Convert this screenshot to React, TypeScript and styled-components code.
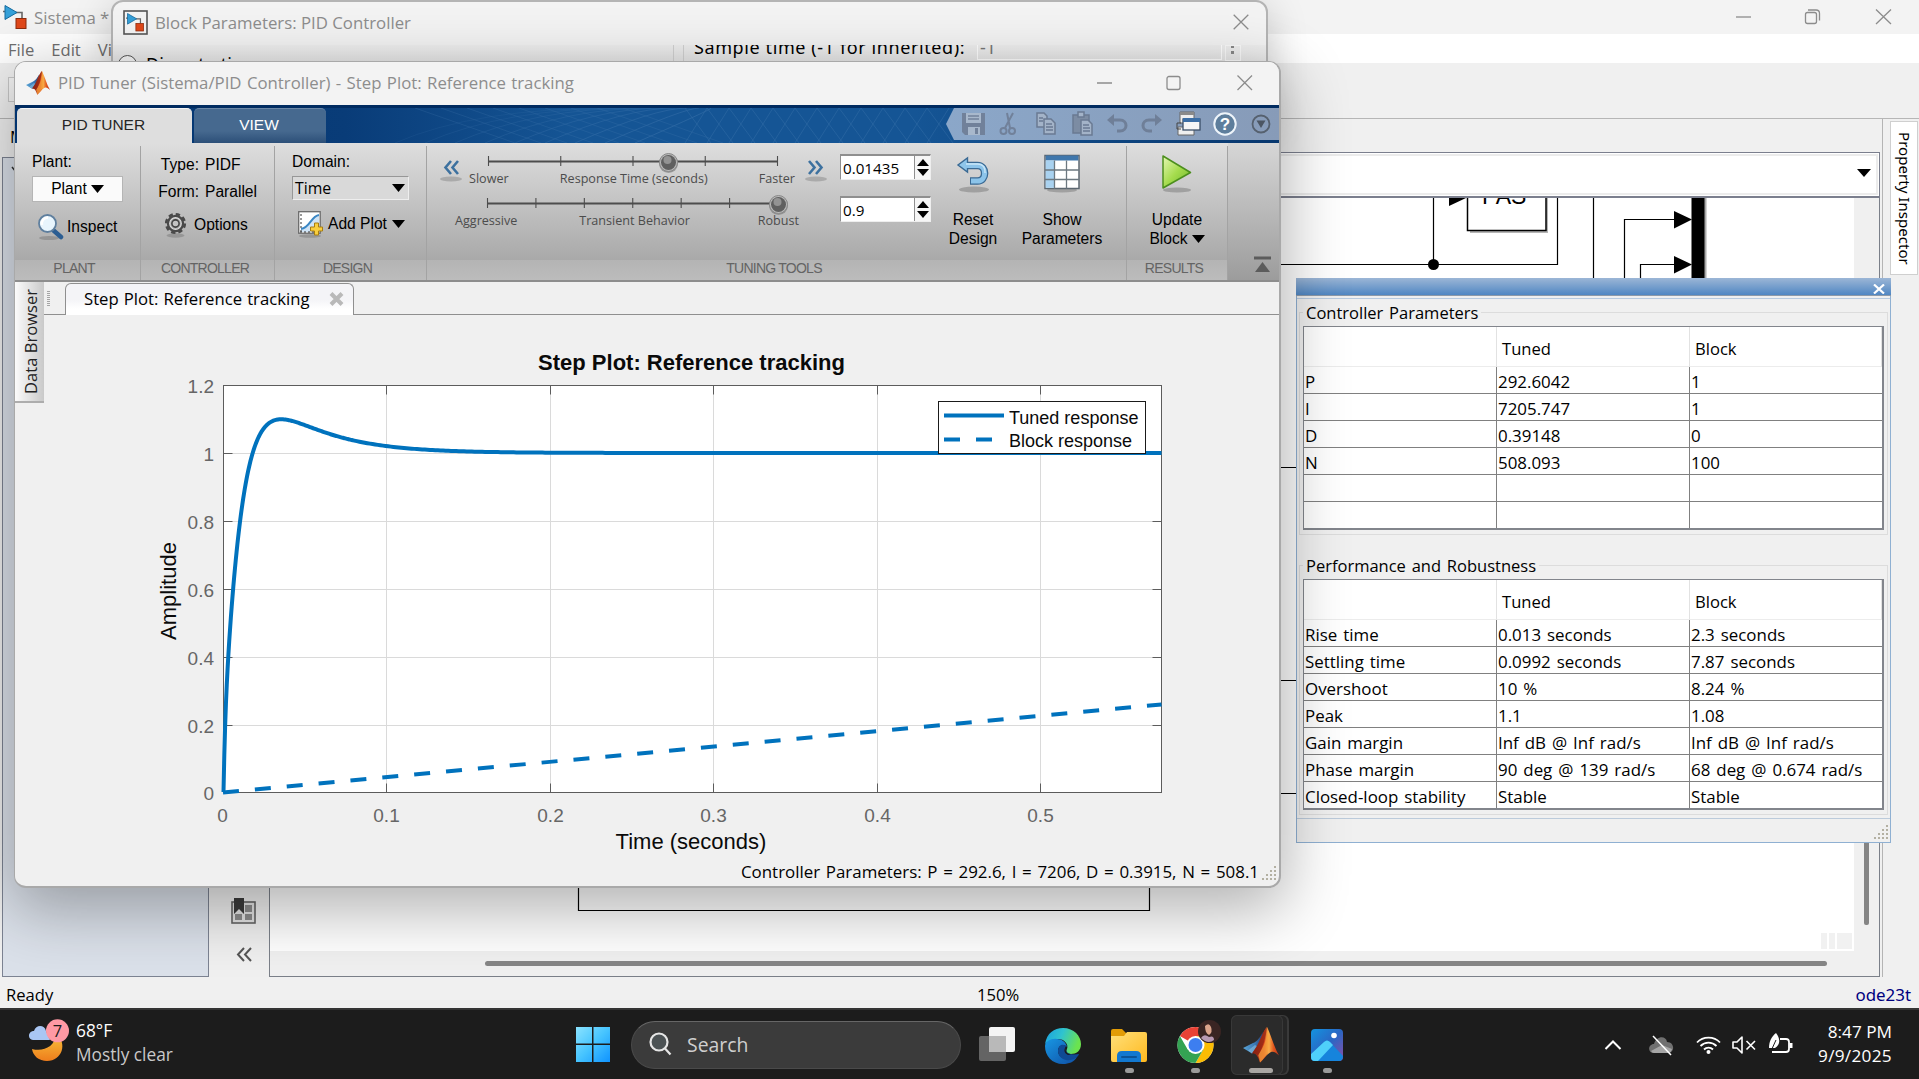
import React from 'react';
import styled, { createGlobalStyle } from 'styled-components';

const UI = `'Open Sans', 'Noto Sans', sans-serif`;
const ARIAL = `'Liberation Sans', Arial, sans-serif`;

const Global = createGlobalStyle`
  *, *::before, *::after { box-sizing: border-box; }
  html, body { margin: 0; padding: 0; overflow: hidden; }
  body { font-family: ${UI}; font-size: 16.4px; color: #000; }
  svg { display: block; flex: none; }
`;

const Desktop = styled.div`
  position: relative;
  width: 1919px;
  height: 1079px;
  overflow: hidden;
  display: flex;
  flex-direction: column;
  background: #f0f0f0;
`;

/* ---------- Simulink editor window ---------- */
const Editor = styled.div`
  height: 1008px;
  display: flex;
  flex-direction: column;
  background: #f0f0f0;
  & > * { flex-shrink: 0; }
`;
const EditorTitle = styled.div`
  height: 34px;
  display: flex;
  align-items: center;
  padding: 0 27px 0 3px;
  background: #f3f3f3;
  color: #8d8d8d;
  font-size: 16.8px;
  svg + span { margin-left: 6px; }
`;
const Spacer = styled.div`flex: 1;`;
const EditorMenu = styled.div`
  height: 31px;
  display: flex;
  gap: 17px;
  padding-left: 8px;
  line-height: 32px;
  background: #fff;
  border-bottom: 2px solid #f0f0f0;
  color: #6f6f6f;
  font-size: 16.6px;
`;
const EditorTools = styled.div`
  height: 54px;
  padding: 12px 8px;
  border-bottom: 1px solid #b6b6b6;
`;
const ToolStub = styled.div`
  width: 30px;
  height: 25px;
  border: 1px solid #c8c8c8;
  background: #f4f4f4;
`;
const EditorBody = styled.div`
  height: 858px;
  display: flex;
  padding-left: 2px;
`;
const TreeColumn = styled.div`
  width: 207px;
  display: flex;
  flex-direction: column;
`;
const TreeCaption = styled.div`
  height: 38px;
  padding: 6px 0 0 8px;
  line-height: 24px;
`;
const Tree = styled.div`
  flex: 1;
  padding: 8px 8px;
  border: 1px solid #7c8392;
  background: #dbe1ea;
`;
const Palette = styled.div`
  width: 60px;
  display: flex;
  flex-direction: column;
  align-items: center;
  justify-content: flex-end;
  gap: 23px;
  padding: 0 0 15px 9px;
`;
const CanvasColumn = styled.div`
  width: 1611px;
  display: flex;
  flex-direction: column;
  padding-top: 33px;
`;
const AddressBar = styled.div`
  height: 46px;
  display: flex;
  align-items: center;
  justify-content: flex-end;
  padding: 0 8px 3px 0;
  border: 1px solid #7b7f8e;
  border-bottom-width: 2px;
  background: #fff;
  box-shadow: inset 0 0 0 1px #fff, inset 0 0 0 3px #ececec;
`;
const CanvasFrame = styled.div`
  flex: 1;
  display: flex;
  flex-direction: column;
  border: 1px solid #7b8089;
  border-top: 0;
  background: #f0f0f0;
`;
const CanvasRow = styled.div`
  height: 753px;
  display: flex;
`;
const Sheet = styled.div`
  width: 1584px;
  background: #fff;
`;
const VTrack = styled.div`
  width: 25px;
  padding: 588px 0 0 10px;
`;
const VThumb = styled.div`
  width: 5px;
  height: 139px;
  border-radius: 2px;
  background: #858585;
`;
const HTrack = styled.div`
  flex: 1;
  padding: 10px 0 0 215px;
`;
const HThumb = styled.div`
  width: 1342px;
  height: 5px;
  border-radius: 3px;
  background: #858585;
`;
const InspectorColumn = styled.div`
  width: 36px;
  margin-left: 2px;
  border-left: 1px solid #b4b4b4;
  padding: 2px 0 0 7px;
`;
const InspectorTab = styled.div`
  width: 28px;
  height: 154px;
  border: 1px solid #cfcfcf;
  background: #fff;
  writing-mode: vertical-rl;
  padding-top: 10px;
  font: 15.1px/25px 'Noto Sans', sans-serif;
`;
const EditorStatus = styled.div`
  height: 31px;
  display: grid;
  grid-template-columns: 971px 1fr auto;
  padding: 0 8px 0 6px;
  line-height: 35px;
  font-size: 16.6px;
  a { color: #00007f; font-family: 'Noto Sans', sans-serif; font-size: 16.9px; }
`;

/* ---------- Block parameters dialog ---------- */
const Dialog = styled.div`
  position: absolute;
  left: 111px;
  top: 0;
  width: 1157px;
  height: 120px;
  border: 2px solid #b4b4b4;
  border-radius: 12px 12px 0 0;
  background: #f3f3f3;
  box-shadow: 0 8px 40px rgba(0, 0, 0, 0.2);
  overflow: hidden;
`;
const DialogTitle = styled.div`
  height: 43px;
  display: flex;
  align-items: center;
  padding: 0 17px 3px 10px;
  color: #8d8d8d;
  font-size: 16.8px;
  span { margin-left: 7px; }
`;
const DialogBody = styled.div`
  height: 40px;
  display: flex;
  background: linear-gradient(#efefef, #dcdcdc);
  overflow: hidden;
  font-size: 17.6px;
`;
const RadioRow = styled.div`
  width: 561px;
  display: flex;
  padding: 10px 0 0 5px;
  gap: 9px;
  line-height: 24px;
  border-right: 1px solid #d2d2d2;
  span { margin-top: -3px; font-family: 'Noto Sans', sans-serif; font-size: 18px; }
`;
const Radio = styled.i`
  width: 19px;
  height: 19px;
  border: 1px solid #555;
  border-radius: 50%;
  background: #f6f6f6;
`;
const SampleRow = styled.div`
  flex: 1;
  display: flex;
  margin-left: 9px;
  padding-left: 10px;
  border-left: 1px solid #d2d2d2;
  line-height: 4px;
  white-space: nowrap;
  font-family: 'Noto Sans', sans-serif;
  font-size: 18px;
  & > span { width: 283px; letter-spacing: 0.6px; }
`;
const SampleField = styled.div`
  width: 245px;
  height: 15px;
  padding-left: 2px;
  border: 1px solid #fff;
  border-top: 0;
  color: #777;
`;
const MoreButton = styled.div`
  width: 16px;
  height: 16px;
  margin-left: 3px;
  border: 1px solid #fafafa;
  display: flex;
  justify-content: center;
`;

/* ---------- PID tuner window ---------- */
const Tuner = styled.div`
  position: absolute;
  left: 14px;
  top: 61px;
  width: 1267px;
  height: 827px;
  display: flex;
  flex-direction: column;
  border: 2px solid #a9a9a9;
  border-left-width: 1px;
  border-top-width: 1px;
  border-radius: 12px;
  background: #f0f0f0;
  box-shadow: 0 18px 64px 4px rgba(0, 0, 0, 0.31);
  overflow: hidden;
`;
const TunerTitle = styled.div`
  height: 43px;
  display: flex;
  align-items: center;
  padding: 0 26px 2px 11px;
  background: #f3f3f3;
  color: #8d8d8d;
  font-size: 16.8px;
  span { margin-left: 8px; word-spacing: 1px; }
`;
const TabStrip = styled.div`
  height: 38px;
  display: flex;
  align-items: flex-end;
  background: linear-gradient(90deg, #02346f 0, #093c78 330px, #155595 560px, #155595 900px, #08386f 1250px);
  border-top: 3px solid #002b60;
  position: relative;
`;
const StripPattern = styled.svg`
  position: absolute;
  left: 340px;
  top: 0;
`;
const RibbonTab = styled.div<{ $w: number; $on?: boolean }>`
  width: ${p => p.$w}px;
  height: 35px;
  margin-left: 2px;
  padding-right: 2px;
  border-radius: 5px 5px 0 0;
  text-align: center;
  font: 15.5px/32px ${ARIAL};
  color: ${p => (p.$on ? '#262626' : '#fff')};
  background: ${p => (p.$on ? '#dedede' : 'linear-gradient(#46698f 0, #46698f 65%, #2c4f78)')};
  border-top: 1px solid ${p => (p.$on ? '#f4f4f4' : '#6b87a6')};
`;
const QuickAccess = styled.div`
  position: relative;
  width: 333px;
  height: 32px;
  margin-left: auto;
  margin-bottom: 3px;
  padding-left: 15px;
  display: flex;
  align-items: center;
  background: linear-gradient(90deg, #8ba7c9, #879bb8);
  clip-path: polygon(8px 0, 100% 0, 100% 100%, 8px 100%, 0 50%);
`;
const QuickSlot = styled.div<{ $w: number }>`
  width: ${p => p.$w}px;
  display: flex;
`;
const Ribbon = styled.div`
  height: 139px;
  display: flex;
  background: linear-gradient(#dedede 0, #a9a9a9 117px, #b4b4b4 117px, #bcbcbc);
  border-bottom: 2px solid #8d8d8d;
  font-family: ${ARIAL};
  font-size: 15.6px;
`;
const Section = styled.div<{ $w: number }>`
  width: ${p => p.$w}px;
  display: flex;
  flex-direction: column;
  border-right: 1px solid;
  border-image: linear-gradient(transparent 4px, #a3a3a3 4px) 1;
`;
const SectionBody = styled.div<{ $row?: boolean; $pl?: number }>`
  height: 117px;
  display: flex;
  flex-direction: ${p => (p.$row ? 'row' : 'column')};
  padding-left: ${p => p.$pl || 0}px;
`;
const SectionName = styled.div<{ $shift?: number }>`
  height: 20px;
  padding-right: ${p => p.$shift || 0}px;
  text-align: center;
  font-size: 14px;
  letter-spacing: -0.75px;
  line-height: 17px;
  color: #646464;
`;
const Caption = styled.div`
  height: 33px;
  line-height: 37px;
`;
const PlantButton = styled.div`
  width: 91px;
  height: 26px;
  display: flex;
  align-items: center;
  justify-content: center;
  gap: 4px;
  background: #fafafa;
  border: 1px solid #b5b5b5;
  line-height: 24px;
`;
const TimeSelect = styled.div`
  width: 117px;
  height: 24px;
  display: flex;
  align-items: center;
  justify-content: space-between;
  padding: 0 3px 0 2px;
  border: 1px solid #979797;
  border-right-color: #eee;
  border-bottom-color: #eee;
  background: #d9d9d9;
  font: 15.8px/22px ${UI};
`;
const ToolLine = styled.div<{ $mt: number; $ml: number; $gap: number }>`
  display: flex;
  align-items: center;
  height: 28px;
  margin: ${p => p.$mt}px 0 0 ${p => p.$ml}px;
  gap: ${p => p.$gap}px;
  white-space: nowrap;
`;
const FormGrid = styled.div`
  display: grid;
  grid-template-columns: 41px 1fr;
  column-gap: 6px;
  padding: 8px 0 0 17px;
  grid-auto-rows: 27px;
  line-height: 27px;
  span:nth-child(odd) { text-align: right; }
`;
const Sliders = styled.div`
  width: 397px;
  display: flex;
  flex-direction: column;
  gap: 3px;
  padding-top: 4px;
`;
const SliderRow = styled.div<{ $pl: number }>`
  height: 39px;
  display: flex;
  padding-left: ${p => p.$pl}px;
`;
const SliderBlock = styled.div<{ $w: number; $pl?: number }>`
  width: ${p => p.$w}px;
  padding-left: ${p => p.$pl || 0}px;
`;
const SliderNames = styled.div<{ $mid: number }>`
  display: flex;
  justify-content: space-between;
  margin-top: 1px;
  font: 12.6px/16px ${UI};
  color: #4c4c4c;
  white-space: nowrap;
  span:nth-child(2) { margin-left: ${p => p.$mid * 2}px; }
`;
const Jog = styled.div<{ $w: number; $ml: number }>`
  width: ${p => p.$w}px;
  margin-left: ${p => p.$ml}px;
  padding-top: 12px;
`;
const Spinners = styled.div`
  width: 91px;
  display: flex;
  flex-direction: column;
  gap: 16px;
  margin-left: 16px;
  padding-top: 11px;
`;
const SpinBox = styled.div`
  height: 26px;
  display: flex;
  border: 1px solid #8f8f8f;
  border-top-width: 2px;
  border-right-color: #eee;
  border-bottom-color: #eee;
  background: #f6f6f6;
  font: 15.2px/24px ${UI};
  & > span { flex: 1; padding-left: 2px; background: #fff; border-right: 1px solid #8f8f8f; }
`;
const SpinButtons = styled.div`
  width: 15px;
  display: flex;
  flex-direction: column;
  align-items: center;
  justify-content: space-evenly;
`;
const BigButton = styled.div<{ $w: number; $ml: number }>`
  width: ${p => p.$w}px;
  margin-left: ${p => p.$ml}px;
  padding-top: 10px;
  display: flex;
  flex-direction: column;
  align-items: center;
  line-height: 19px;
  text-align: center;
`;
const BigIcon = styled.div<{ $ml?: number }>`
  height: 57px;
  padding-left: ${p => p.$ml || 0}px;
`;
const InlineRow = styled.div`
  display: flex;
  align-items: center;
  gap: 4px;
`;
const Collapse = styled.div`
  flex: 1;
  background: linear-gradient(#d6d6d6, #9c9c9c);
  padding: 113px 0 0 26px;
`;

const DocArea = styled.div`
  height: 572px;
  display: flex;
`;
const SideBar = styled.div`width: 29px;`;
const SideTab = styled.div`
  width: 29px;
  height: 121px;
  padding-right: 3px;
  writing-mode: vertical-rl;
  transform: rotate(180deg);
  text-align: center;
  font-size: 16.6px;
  line-height: 26px;
  color: #222;
  background: linear-gradient(270deg, #fbfbfb, #c9c9c9);
  border-top: 2px solid #adadad;
`;
const DocColumn = styled.div`
  flex: 1;
  display: flex;
  flex-direction: column;
`;
const DocTabs = styled.div`
  height: 33px;
  display: flex;
  align-items: flex-end;
`;
const TabGap = styled.div<{ $w?: number }>`
  ${p => (p.$w ? `width: ${p.$w}px;` : 'flex: 1;')}
  height: 32px;
  padding: 8px 0 0 3px;
  border-bottom: 1px solid #8f8f8f;
`;
const Grip = styled.div`
  width: 3px;
  height: 15px;
  background: repeating-linear-gradient(#a5a5a5 0 1px, transparent 1px 2px);
`;
const DocTab = styled.div`
  width: 289px;
  height: 32px;
  display: flex;
  align-items: center;
  padding: 0 9px 2px 18px;
  border: 1px solid #8f8f8f;
  border-bottom: 0;
  border-radius: 6px 6px 0 0;
  background: linear-gradient(#f4f4f7 50%, #fff 80%);
  justify-content: space-between;
  white-space: nowrap;
  span { font-size: 16.7px; word-spacing: 0.8px; line-height: 28px; }
`;
const TunerStatus = styled.div`
  height: 30px;
  display: flex;
  justify-content: flex-end;
  align-items: flex-end;
  padding: 0 2px 3px 0;
  gap: 3px;
  font-size: 16.9px;
  word-spacing: 1.3px;
  span { line-height: 30px; margin-bottom: -6px; }
`;

/* ---------- Parameters panel ---------- */
const Panel = styled.div`
  position: absolute;
  left: 1296px;
  top: 278px;
  width: 595px;
  height: 565px;
  display: flex;
  flex-direction: column;
  border: 1px solid #8fb0d2;
  background: #f0f0f0;
`;
const PanelBar = styled.div`
  height: 18px;
  margin: -1px -1px 0;
  display: flex;
  justify-content: flex-end;
  padding: 6px 6px 0 0;
  background: linear-gradient(#9cb6d6, #5087c3);
  border-bottom: 1px solid #8e9aa8;
`;
const PanelRule = styled.div`
  height: 3px;
  border-bottom: 1px solid #b8cbe0;
`;
const Group = styled.fieldset<{ $h: number; $mt: number }>`
  height: ${p => p.$h}px;
  width: 589px;
  margin: ${p => p.$mt}px 0 0 2px;
  padding: 1px 0 0 3px;
  border: 1px solid #dcdcdc;
`;
const Legend = styled.legend`
  padding: 0 3px;
  font-size: 16.5px;
  word-spacing: 1.5px;
  line-height: 25px;
  height: 25px;
`;
const Table = styled.div`
  width: 581px;
  display: grid;
  grid-template-columns: 193px 193px 192px;
  border: 1px solid #82858c;
  border-right-width: 2px;
  border-bottom-width: 2px;
  background: #fff;
`;
const HeadCell = styled.div`
  height: 40px;
  padding-left: 5px;
  line-height: 43px;
  font-size: 16.6px;
  border-right: 1px solid #e2e2e2;
  border-bottom: 1px solid #ececec;
`;
const Cell = styled.div<{ $last?: boolean; $edge?: boolean }>`
  height: ${p => (p.$last ? 26 : 27)}px;
  padding-left: 1px;
  font-size: 16.9px;
  word-spacing: 1.6px;
  line-height: 29px;
  white-space: nowrap;
  border-right: ${p => (p.$edge ? 0 : 1)}px solid #808080;
  border-bottom: ${p => (p.$last ? 0 : 1)}px solid #808080;
`;
const PanelFoot = styled.div`
  flex: 1;
  margin-top: 3px;
  display: flex;
  justify-content: flex-end;
  align-items: flex-end;
  padding: 0 1px 2px 0;
  border-top: 1px solid #bccbdb;
`;

/* ---------- Taskbar ---------- */
const Taskbar = styled.div`
  height: 71px;
  display: flex;
  align-items: center;
  background: #1c1c1c;
  border-top: 2px solid #343434;
  color: #fff;
  position: relative;
`;
const Weather = styled.div`
  width: 574px;
  display: flex;
  gap: 6px;
  padding: 0 0 3px 28px;
  font-size: 17.3px;
  line-height: 24px;
  color: #c9c9c9;
  b { font-weight: 400; color: #fff; }
  div { display: flex; flex-direction: column; }
`;
const SearchBox = styled.div`
  width: 330px;
  height: 48px;
  margin-left: 20px;
  display: flex;
  align-items: center;
  padding: 0 0 1px 16px;
  gap: 15px;
  border-radius: 24px;
  background: #3b3b3b;
  border: 1px solid #4a4a4a;
  border-top-color: #666;
  font-size: 19.4px;
  color: #cfcfcf;
`;
const Apps = styled.div`
  display: flex;
  margin-left: 14px;
`;
const AppSlot = styled.div`
  position: relative;
  width: 54px;
  height: 60px;
  margin-right: 12px;
  display: flex;
  justify-content: center;
  padding-top: 12px;
`;
const TaskViewSlot = styled(AppSlot)`
  width: 43px;
  padding-top: 11px;
  margin-right: 18px;
`;
const ChromeSlot = styled(AppSlot)`
  padding: 4px 0 0 9px;
`;
const ActiveSlot = styled(AppSlot)`
  width: 52px;
  margin: 0 17px 0 -3px;
  padding-left: 7px;
  border-radius: 6px;
  background: #2b2b2b;
  box-shadow: inset 0 0 0 1px #383838, 5px 0 0 -1px #262626, 6px 0 0 0 #3a3a3a;
`;
const Running = styled.i<{ $wide?: boolean }>`
  position: absolute;
  bottom: 2px;
  left: 50%;
  width: ${p => (p.$wide ? 24 : 9)}px;
  height: 5px;
  margin-left: ${p => (p.$wide ? -8 : -4)}px;
  border-radius: 3px;
  background: ${p => (p.$wide ? '#a9a6a3' : '#9a9a9a')};
`;
const Tray = styled.div`
  margin-left: auto;
  display: flex;
  align-items: center;
`;
const TraySlot = styled.div<{ $w: number }>`width: ${p => p.$w}px;`;
const Clock = styled.div`
  width: 129px;
  padding: 0 27px 2px 0;
  display: flex;
  flex-direction: column;
  align-items: flex-end;
  white-space: nowrap;
  font-size: 17.2px;
  line-height: 24px;
  span:last-child { letter-spacing: 0.3px; }
`;

/* ---------- Icons ---------- */
const Down = ({ w = 13, h = 8 }: { w?: number; h?: number }) => (
  <svg width={w} height={h} viewBox="0 0 12 8" preserveAspectRatio="none"><path d="M0 0H12L6 8Z" fill="#000" /></svg>
);
const Up = () => (
  <svg width="12" height="7"><path d="M0 7H12L6 0Z" fill="#000" /></svg>
);
const CloseX = ({ c = '#8c8c8c' }: { c?: string }) => (
  <svg width="16" height="16"><path d="M.7 .7L15.3 15.3M15.3 .7L.7 15.3" stroke={c} strokeWidth="1.3" /></svg>
);

const SimulinkIcon = ({ framed }: { framed?: boolean }) => (
  <svg width="25" height="25" viewBox="0 0 25 25">
    {framed && <rect x="1" y="1" width="23" height="23" fill="#f4f4f4" stroke="#555" strokeWidth="1.6" />}
    <g transform={framed ? 'translate(3 3.5) scale(.76)' : 'translate(0 .5)'}>
      <path d="M0 6H4M13 7H19V13" fill="none" stroke="#666" strokeWidth="1.6" />
      <path d="M2 0L14 7L2 14Z" fill="#35a0d8" stroke="#14699c" strokeWidth="1" />
      <rect x="13" y="13" width="10" height="10" fill="#e0481a" stroke="#8d2b0c" />
    </g>
  </svg>
);

const MatlabIcon = ({ size }: { size: number }) => (
  <svg width={size} height={size} viewBox="0 0 36 36">
    <defs>
      <linearGradient id={`mo${size}`} x1="0" x2="1" y1="0" y2="0">
        <stop offset="0" stopColor="#7d1f12" /><stop offset=".45" stopColor="#d7431b" />
        <stop offset=".62" stopColor="#f9b04c" /><stop offset=".8" stopColor="#e2571e" /><stop offset="1" stopColor="#b5301a" />
      </linearGradient>
      <linearGradient id={`mb${size}`} x1="0" x2="1" y1="0" y2="0">
        <stop offset="0" stopColor="#5aa5d6" /><stop offset=".6" stopColor="#3a78b4" /><stop offset="1" stopColor="#2b3a6c" />
      </linearGradient>
    </defs>
    <path d="M0 21L10 16C14 15 17 10 20 5L17 20L9 26.500Z" fill={`url(#mb${size})`} />
    <path d="M5 23.500L12 18L15 20L9 26.500Z" fill="#8cc0de" opacity=".6" />
    <path d="M24 0C20 4 18 12 14 19L9 26.500C13 25.500 15 30 17 35.500C21 32 24 27 28 25C31 24 33 26 36 28.500C31 20 28 8 24 0Z" fill={`url(#mo${size})`} />
    <path d="M24 0C24.500 9 22 19 15 28C16 30 16.500 32 17 35.500C21 32 23 28 25 25C27 16 26 8 24 0Z" fill="#f6a43c" opacity=".7" />
    <path d="M24 0C20 4 18 12 14 19L9 26.500C12 25.500 14 27 15 29C20 20 23 10 24 0Z" fill="#8c2414" opacity=".7" />
  </svg>
);

const InspectIcon = () => (
  <svg width="27" height="28" viewBox="0 0 27 28">
    <ellipse cx="12" cy="25" rx="10" ry="2" fill="#777" opacity=".5" />
    <path d="M16 17L24 24" stroke="#2b5d92" strokeWidth="4.500" strokeLinecap="round" />
    <circle cx="10.500" cy="10.500" r="8.500" fill="#e8f5fd" stroke="#5f7f9e" strokeWidth="1.8" />
    <path d="M5 12A6 6 0 0 1 11 4.500" stroke="#fff" strokeWidth="2.500" fill="none" />
  </svg>
);
const GearIcon = () => (
  <svg width="23" height="27" viewBox="0 0 23 27">
    <ellipse cx="11.500" cy="23.500" rx="9" ry="2.200" fill="#777" opacity=".5" />
    <circle cx="11.500" cy="11.500" r="9.300" fill="none" stroke="#4a4a4a" strokeWidth="2.600" strokeDasharray="4.300 3" />
    <circle cx="11.500" cy="11.500" r="7.200" fill="#aaa" stroke="#4a4a4a" strokeWidth="3" />
    <circle cx="11.500" cy="11.500" r="5.800" fill="none" stroke="#ddd" strokeWidth="1.200" />
    <circle cx="11.500" cy="11.500" r="3.600" fill="#c4c4c4" stroke="#444" strokeWidth="1.600" />
  </svg>
);
const AddPlotIcon = () => (
  <svg width="25" height="27" viewBox="0 0 25 27">
    <ellipse cx="12" cy="25" rx="11" ry="1.800" fill="#777" opacity=".5" />
    <rect x=".7" y=".7" width="21.500" height="21.500" fill="#fff" stroke="#6a6a6a" strokeWidth="1.300" />
    <path d="M3 18C12 17 13 5 21 4V21H3Z" fill="#cfe3f5" />
    <path d="M3 18C12 17 13 5 21 4" fill="none" stroke="#3b87c4" strokeWidth="2" />
    <path d="M2 21H21M3 3V21" stroke="#333" strokeDasharray="2 2" />
    <path d="M16.500 12H20.500V16H24.500V20H20.500V24H16.500V20H12.500V16H16.500Z" fill="#f8cf3f" stroke="#a77d12" />
  </svg>
);
const JogIcon = ({ flip }: { flip?: boolean }) => (
  <svg width="22" height="24" viewBox="0 0 22 24">
    <ellipse cx="11" cy="20" rx="11" ry="2.500" fill="#808080" opacity=".45" />
    <g transform={flip ? 'translate(22 0) scale(-1 1)' : undefined} fill="none" stroke="#3d719f" strokeWidth="2.600">
      <path d="M11 2L5.500 8.500L11 15M18 2L12.500 8.500L18 15" />
    </g>
  </svg>
);
const ResetIcon = () => (
  <svg width="36" height="42" viewBox="0 0 36 42">
    <ellipse cx="18" cy="36.500" rx="15" ry="3" fill="#777" opacity=".5" />
    <path d="M10 12.500H21.500C31 12.500 31 28 21.500 28H14" fill="none" stroke="#3a6a94" strokeWidth="7.500" />
    <path d="M11.500 5V19L2 12Z" fill="#8fc6ea" stroke="#3a6a94" strokeWidth="1.400" />
    <path d="M9 12.500H21.500C31 12.500 31 28 21.500 28H15" fill="none" stroke="#8cc4ea" strokeWidth="5" />
    <path d="M10 11H21.500C28 11 29.500 16 29 20" fill="none" stroke="#c9e6f8" strokeWidth="1.500" />
  </svg>
);
const GridIcon = () => (
  <svg width="36" height="42" viewBox="0 0 36 42">
    <ellipse cx="18" cy="37" rx="15" ry="2.500" fill="#777" opacity=".5" />
    <rect x="1" y="2.500" width="34" height="33" fill="#fff" stroke="#5c6770" strokeWidth="1.500" />
    <rect x="1.700" y="2.500" width="32.600" height="5" fill="#3f77ac" />
    <rect x="1.700" y="7.500" width="8.500" height="27.300" fill="#a9d2f0" />
    <path d="M10.500 7.500V35.500M22.500 7.500V35.500M1 17H35M1 26.500H35" stroke="#6c7880" strokeWidth="1.300" />
  </svg>
);
const PlayIcon = () => (
  <svg width="32" height="42" viewBox="0 0 32 42">
    <defs><linearGradient id="play" x1="0" y1="0" x2="1" y2="1"><stop offset="0" stopColor="#e6f7b5" /><stop offset=".5" stopColor="#a5dc4d" /><stop offset="1" stopColor="#6cb52a" /></linearGradient></defs>
    <ellipse cx="16" cy="37" rx="14" ry="2.500" fill="#777" opacity=".5" />
    <path d="M2 3L29.500 19.500L2 35Z" fill="url(#play)" stroke="#4c8f1d" strokeWidth="1.500" strokeLinejoin="round" />
  </svg>
);

const TrackSvg = styled.svg`overflow: visible;`;
const Track = ({ w, from, to, ticks, knob }: { w: number; from: number; to: number; ticks: number; knob: number }) => (
  <TrackSvg width={w} height="23">
    <path d={`M${from} 14.500H${to}`} stroke="#4d4d4d" strokeWidth="2" />
    {Array.from({ length: ticks }, (_, i) => (
      <path key={i} d={`M${from + ((to - from) * i) / (ticks - 1)} 9V19`} stroke="#4d4d4d" strokeWidth="1.100" />
    ))}
    <circle cx={knob} cy="16.500" r="9.500" fill="#777" opacity=".6" />
    <circle cx={knob} cy="15.500" r="9" fill="#b9b9b9" stroke="#888" />
    <circle cx={knob} cy="15.500" r="7.500" fill="#606060" />
    <circle cx={knob - 1} cy="13" r="4" fill="#939393" />
  </TrackSvg>
);

const Resize = () => (
  <svg width="15" height="15">
    {[[12, 0], [12, 4], [8, 4], [12, 8], [8, 8], [4, 8], [12, 12], [8, 12], [4, 12], [0, 12]].map(([x, y]) => (
      <rect key={`${x}-${y}`} x={x} y={y} width="2" height="2" fill="#b3b0a2" />
    ))}
  </svg>
);

/* ---------- Step response plot ---------- */
const X0 = 179.5, X1 = 1117.5, Y0 = 477.5, Y1 = 70.5;
const PX_PER_SEC = 1634;
const sx = (t: number) => X0 + t * PX_PER_SEC;
const sy = (v: number) => Math.round(Y0 - v * 339.2) + 0.5;

const tuned = (t: number) =>
  1 - 1.42 * Math.exp(-98 * t) + 0.42 * Math.exp(-30.3 * t) + 0.2 * (Math.exp(-250 * t) - Math.exp(-900 * t));
const tunedPath = Array.from({ length: 470 }, (_, i) => {
  const t = i < 160 ? i * 0.0005 : 0.08 + (i - 160) * 0.0016;
  return `${Math.min(sx(t), X1).toFixed(2)} ${(477 - tuned(t) * 339).toFixed(2)}`;
}).join('L');

const PlotText = styled.text<{ $s: number; $c?: string; $b?: boolean }>`
  font-family: ${ARIAL};
  font-size: ${p => p.$s}px;
  font-weight: ${p => (p.$b ? 700 : 400)};
  fill: ${p => p.$c || '#0a0a0a'};
`;

const Plot = () => (
  <svg width="1234" height="539" viewBox="0 0 1234 539">
    <rect x={X0} y={Y1} width={X1 - X0} height={Y0 - Y1} fill="#fff" />
    {[0.1, 0.2, 0.3, 0.4, 0.5].map(t => {
      const x = Math.floor(sx(t)) + 0.5;
      return (
        <g key={t}>
          <path d={`M${x} ${Y1}V${Y0}`} stroke="#dadada" />
          <path d={`M${x} ${Y1}v9M${x} ${Y0}v-9`} stroke="#5c5c5c" />
          <PlotText $s={19} $c="#666" x={x} y="506.500" textAnchor="middle">{t}</PlotText>
        </g>
      );
    })}
    <PlotText $s={19} $c="#666" x={X0 - 1} y="506.500" textAnchor="middle">0</PlotText>
    {[0, 0.2, 0.4, 0.6, 0.8, 1, 1.2].map(v => {
      const y = v === 0 ? Y0 : v === 1.2 ? Y1 : sy(v);
      return (
        <g key={v}>
          {v > 0 && v < 1.2 && <path d={`M${X0} ${y}H${X1}`} stroke="#dadada" />}
          <path d={`M${X0} ${y}h9M${X1} ${y}h-9`} stroke="#5c5c5c" />
          <PlotText $s={19} $c="#666" x="170" y={y + 7.5} textAnchor="end">{v}</PlotText>
        </g>
      );
    })}
    <rect x={X0} y={Y1} width={X1 - X0} height={Y0 - Y1} fill="none" stroke="#5c5c5c" />
    <path d={`M${tunedPath}`} fill="none" stroke="#0072bd" strokeWidth="4" strokeLinejoin="round" />
    <path d={`M${X0 - 0.5} ${Y0}L${X1} 389.500`} fill="none" stroke="#0072bd" strokeWidth="4" strokeDasharray="16 16" />
    <rect x="894.500" y="86.500" width="207" height="52" fill="#fff" stroke="#1a1a1a" />
    <path d="M900 100.500H960" stroke="#0072bd" strokeWidth="4" />
    <path d="M900 124.500H960" stroke="#0072bd" strokeWidth="4" strokeDasharray="16 16" />
    <PlotText $s={18} x="965" y="109">Tuned response</PlotText>
    <PlotText $s={18} x="965" y="132">Block response</PlotText>
    <PlotText $s={22} $b x="647.500" y="55" textAnchor="middle">Step Plot: Reference tracking</PlotText>
    <PlotText $s={22} x="647" y="534" textAnchor="middle">Time (seconds)</PlotText>
    <PlotText $s={22} transform="translate(131.500 276) rotate(-90)" textAnchor="middle">Amplitude</PlotText>
  </svg>
);

/* ---------- Model sheet: sheet origin is (270,198) on the desktop ---------- */
const ModelLabel = styled.text`
  font-family: ${ARIAL};
  font-size: 23px;
`;
const Model = () => (
  <svg width="1584" height="752" viewBox="270 198 1584 752">
    <g fill="none" stroke="#000" strokeWidth="1.200">
      <path d="M1270 264.500H1557.500V190M1433.500 190V264.500M1593.500 190V300" />
      <path d="M1624.500 300V219.500H1676M1640.500 300V264.500H1676" />
      <path d="M1270 467.500H1300M1270 680.500H1300M1270 793.500H1300" />
      <path d="M578.500 800V910.500H1149.500V800" />
    </g>
    <circle cx="1433.500" cy="264.500" r="5.500" />
    <path d="M1449 190L1466 198L1449 206Z M1674 211L1692 219.500L1674 228.500Z M1674 256L1692 264.500L1674 273.500Z" />
    <rect x="1470" y="190" width="78" height="43" fill="#b5b5b5" />
    <rect x="1467.500" y="180" width="78.500" height="50.500" fill="#fff" stroke="#000" strokeWidth="1.500" />
    <ModelLabel x="1482" y="203.500">PAS</ModelLabel>
    <rect x="1694" y="190" width="12.500" height="90" fill="#aaa" />
    <rect x="1691.500" y="190" width="13" height="90" />
    <g fill="#f1f1f1"><rect x="1821" y="933" width="6" height="16" /><rect x="1829" y="933" width="6" height="16" /><rect x="1837" y="933" width="15" height="16" /></g>
  </svg>
);

/* ---------- Data ---------- */
const controller = [
  ['P', '292.6042', '1'], ['I', '7205.747', '1'], ['D', '0.39148', '0'], ['N', '508.093', '100'], ['', '', ''], ['', '', ''],
];
const performance = [
  ['Rise time', '0.013 seconds', '2.3 seconds'],
  ['Settling time', '0.0992 seconds', '7.87 seconds'],
  ['Overshoot', '10 %', '8.24 %'],
  ['Peak', '1.1', '1.08'],
  ['Gain margin', 'Inf dB @ Inf rad/s', 'Inf dB @ Inf rad/s'],
  ['Phase margin', '90 deg @ 139 rad/s', '68 deg @ 0.674 rad/s'],
  ['Closed-loop stability', 'Stable', 'Stable'],
];

const ParamTable = ({ rows }: { rows: string[][] }) => (
  <Table>
    <HeadCell /><HeadCell>Tuned</HeadCell><HeadCell>Block</HeadCell>
    {rows.map((r, i) => r.map((c, j) => (
      <Cell key={`${i}-${j}`} $last={i === rows.length - 1} $edge={j === 2}>{c}</Cell>
    )))}
  </Table>
);

const QuickIcons = () => (
  <>
    <QuickSlot $w={38}>
      <svg width="25" height="26" viewBox="0 0 25 26"><path d="M1 2H24V24H4L1 21Z" fill="#71819a" /><rect x="5" y="2" width="15" height="10" fill="#a8b8cc" /><path d="M7 5H18M7 8H18" stroke="#71819a" strokeWidth="1.500" /><rect x="7" y="16" width="12" height="8" fill="#a8b8cc" /><rect x="14" y="17" width="3" height="6" fill="#71819a" /></svg>
    </QuickSlot>
    <QuickSlot $w={36}>
      <svg width="18" height="26" viewBox="0 0 18 26" fill="none" stroke="#71819a" strokeWidth="2"><path d="M14 2L6 17M8 2L11 17" /><circle cx="4.500" cy="20" r="3" /><circle cx="13" cy="20" r="3" /></svg>
    </QuickSlot>
    <QuickSlot $w={37}>
      <svg width="22" height="24" viewBox="0 0 22 24" fill="#a3b3c8" stroke="#6a7a92" strokeWidth="1.500"><path d="M2 1H9L12 4V15H2Z" /><path d="M9 7H16L20 11V22H9Z" /><path d="M11 12H17M11 15H18M11 18H18M4 6H8M4 9H8" /></svg>
    </QuickSlot>
    <QuickSlot $w={33}>
      <svg width="22" height="26" viewBox="0 0 22 26" fill="#7c8ca3" stroke="#6a7a92" strokeWidth="1.500"><path d="M1 4H17V22H1Z" /><path d="M6 1H12V6H6Z" fill="#a3b3c8" /><path d="M9 9H16L20 13V24H9Z" fill="#a3b3c8" /><path d="M11 14H17M11 17H18M11 20H18" /></svg>
    </QuickSlot>
    <QuickSlot $w={35}>
      <svg width="24" height="22" viewBox="0 0 24 22" fill="none" stroke="#6f7f98" strokeWidth="3"><path d="M6 7H15C23 7 23 18 15 18H12" /><path d="M9 1V13L2 7Z" fill="#6f7f98" stroke="none" /></svg>
    </QuickSlot>
    <QuickSlot $w={36}>
      <svg width="24" height="22" viewBox="0 0 24 22" fill="none" stroke="#6f7f98" strokeWidth="3"><path d="M18 7H9C1 7 1 18 9 18H12" /><path d="M15 1V13L22 7Z" fill="#6f7f98" stroke="none" /></svg>
    </QuickSlot>
    <QuickSlot $w={37}>
      <svg width="25" height="26" viewBox="0 0 25 26"><path d="M4 1H18V12H4Z M2 16H18V24H2Z" fill="#efefef" stroke="#666" /><rect x="4" y="1" width="14" height="3" fill="#8a8a8a" /><rect x="7" y="8" width="17" height="11" fill="#f6f6f6" stroke="#3b4f68" strokeWidth="1.300" /><rect x="7" y="7" width="17" height="4" fill="#3c6ea5" /><path d="M5 12H1V18H5" fill="none" stroke="#444" /></svg>
    </QuickSlot>
    <QuickSlot $w={38}>
      <svg width="24" height="24" viewBox="0 0 24 24"><circle cx="12" cy="12" r="10.700" fill="#5e7e9c" stroke="#eef4fa" strokeWidth="2" /><text x="12" y="18" textAnchor="middle" fontFamily="Liberation Sans, sans-serif" fontWeight="700" fontSize="17" fill="#fff">?</text></svg>
    </QuickSlot>
    <QuickSlot $w={20}>
      <svg width="20" height="20" viewBox="0 0 20 20"><circle cx="10" cy="10" r="8.500" fill="none" stroke="#56616f" strokeWidth="1.800" /><path d="M5.500 6.500H14.500L10 14Z" fill="#4c5663" /></svg>
    </QuickSlot>
  </>
);

export default function App() {
  return (
    <Desktop>
      <Global />
      <Editor>
        <EditorTitle>
          <SimulinkIcon /><span>Sistema *</span>
          <Spacer />
          <svg width="156" height="16" viewBox="0 0 156 16" fill="none" stroke="#8c8c8c" strokeWidth="1.300">
            <path d="M0 8H15" />
            <rect x="69.500" y="3.500" width="11" height="11" rx="2" /><path d="M72 1H80Q83.500 1 83.500 4.500V11.500" />
            <path d="M140 .5L155 15M155 .5L140 15" />
          </svg>
        </EditorTitle>
        <EditorMenu><span>File</span><span>Edit</span><span>View</span></EditorMenu>
        <EditorTools><ToolStub /></EditorTools>
        <EditorBody>
          <TreeColumn>
            <TreeCaption>M</TreeCaption>
            <Tree><svg width="10" height="8"><path d="M1 1L5 6L9 1" fill="none" stroke="#333" strokeWidth="1.500" /></svg></Tree>
          </TreeColumn>
          <Palette>
            <svg width="25" height="26" viewBox="0 0 25 26"><rect x="1" y="4" width="23" height="21" fill="#e4e4e4" stroke="#666" strokeWidth="1.600" /><rect x="14" y="7" width="7" height="7" fill="#8d8d8d" /><rect x="14" y="16" width="7" height="6" fill="#8d8d8d" /><rect x="4" y="16" width="7" height="6" fill="#8d8d8d" /><path d="M3 0H13V16L8 11L3 16Z" fill="#3c3c3c" /></svg>
            <svg width="16" height="15" viewBox="0 0 16 15" fill="none" stroke="#555" strokeWidth="2"><path d="M8 1L2 7.500L8 14M15 1L9 7.500L15 14" /></svg>
          </Palette>
          <CanvasColumn>
            <AddressBar><Down w={14} h={8} /></AddressBar>
            <CanvasFrame>
              <CanvasRow>
                <Sheet><Model /></Sheet>
                <VTrack><VThumb /></VTrack>
              </CanvasRow>
              <HTrack><HThumb /></HTrack>
            </CanvasFrame>
          </CanvasColumn>
          <InspectorColumn><InspectorTab>Property Inspector</InspectorTab></InspectorColumn>
        </EditorBody>
        <EditorStatus><span>Ready</span><span>150%</span><a>ode23t</a></EditorStatus>
      </Editor>

      <Taskbar>
        <Weather>
          <svg width="42" height="46" viewBox="0 0 42 46">
            <defs><linearGradient id="moon" x1="0" y1="0" x2="0" y2="1"><stop offset="0" stopColor="#f8c33c" /><stop offset="1" stopColor="#ee7d1c" /></linearGradient></defs>
            <path d="M28 15C40 24 34 42 19 42C11 42 5 37 4 30C15 33 27 28 28 15Z" fill="url(#moon)" />
            <path d="M5 21C-1 20 0 12 6 12C8 5 17 6 18 12L22 21Z" fill="#a9c6f3" />
            <circle cx="29.500" cy="11.800" r="11.500" fill="#ff99a4" />
            <text x="29.500" y="17.500" fontSize="16.500" textAnchor="middle" fontFamily="Open Sans, sans-serif" fill="#1c1c1c">7</text>
          </svg>
          <div><b>68°F</b><span>Mostly clear</span></div>
        </Weather>
        <svg width="37" height="37" viewBox="0 0 37 37">
          <defs><linearGradient id="win" x1="0" y1="0" x2="1" y2="1"><stop offset="0" stopColor="#8be3ff" /><stop offset=".5" stopColor="#46c4ff" /><stop offset="1" stopColor="#0f93ff" /></linearGradient></defs>
          <path d="M2 1H18V17.500H2ZM19.500 1H36V17.500H19.500ZM2 19H18V36H2ZM19.500 19H36V36H19.500Z" fill="url(#win)" />
        </svg>
        <SearchBox>
          <svg width="24" height="24" viewBox="0 0 24 24" fill="none" stroke="#e6e6e6" strokeWidth="2.200"><circle cx="11" cy="10" r="8.500" fill="#4c5254" /><path d="M17 16.500L22.500 22.500" /></svg>
          <span>Search</span>
        </SearchBox>
        <Apps>
          <TaskViewSlot>
            <svg width="38" height="36" viewBox="0 0 38 36"><rect x="11" y="1" width="26" height="25" rx="2" fill="#f4f4f4" /><rect x="1" y="10" width="27" height="25" rx="2" fill="#777" opacity=".8" /><rect x="11" y="10" width="17" height="16" fill="#b9b9b9" /></svg>
          </TaskViewSlot>
          <AppSlot>
            <svg width="38" height="38" viewBox="0 0 38 38">
              <defs>
                <linearGradient id="e1" x1="0" y1="0" x2="1" y2=".3"><stop offset="0" stopColor="#1a9fe0" /><stop offset=".5" stopColor="#2fc3cf" /><stop offset="1" stopColor="#6be34f" /></linearGradient>
                <linearGradient id="e2" x1="0" y1="0" x2="1" y2="1"><stop offset="0" stopColor="#1897e3" /><stop offset="1" stopColor="#0f4fa5" /></linearGradient>
              </defs>
              <path d="M1 17C3 6 10 1 19 1C30 1 37 9 37 17C37 24 32 27 27 27C22 27 22 24 23 22C25 17 20 12 14 12C8 12 3 15 1 17Z" fill="url(#e1)" />
              <path d="M1 19C1 14 8 11 13 12C18 12 22 15 23 20C20 16 14 18 14 24C14 30 22 35 33 30C30 35 25 37 19 37C8 37 1 29 1 19Z" fill="url(#e2)" />
              <path d="M14 24C14 19 18 16 22 19C20 24 24 29 35 27C34 31 27 34 22 33C17 32 14 28 14 24Z" fill="#0f4a94" />
              <path d="M22.500 19C20 25 24 28 29 27L24 28C19 26 20 21 22.500 19Z" fill="#1c1c1c" />
            </svg>
          </AppSlot>
          <AppSlot>
            <svg width="38" height="37" viewBox="0 0 38 37"><defs><linearGradient id="fo" x1="0" y1="0" x2="1" y2="1"><stop offset="0" stopColor="#ffe07a" /><stop offset="1" stopColor="#ffb91f" /></linearGradient></defs><path d="M1 4Q1 2 3 2H12L16 6H20V14H1Z" fill="#e29c06" /><path d="M1 9H14L17 5H35Q37 5 37 7V33Q37 35 35 35H3Q1 35 1 33Z" fill="url(#fo)" /><path d="M7 35V29Q7 24 12 24H26Q31 24 31 29V35Z" fill="#1278d0" /><rect x="11" y="29" width="16" height="2" rx="1" fill="#0b5396" /></svg>
            <Running />
          </AppSlot>
          <ChromeSlot>
            <svg width="48" height="46" viewBox="0 0 48 46">
              <circle cx="19.500" cy="26" r="18" fill="#fff" />
              <path d="M19.500 26L3.900 17A18 18 0 0 1 35.100 17L19.500 17Z" fill="#e94235" />
              <path d="M19.500 17H35.100A18 18 0 0 1 19.500 44L27.300 30.500Z" fill="#fbbc04" />
              <path d="M11.700 30.500L3.900 17A18 18 0 0 0 19.500 44L27.300 30.500Z" fill="#34a353" />
              <circle cx="19.500" cy="26" r="9" fill="#fff" /><circle cx="19.500" cy="26" r="7" fill="#3d7ef0" />
              <circle cx="33.500" cy="12.500" r="11.500" fill="#3a2523" />
              <path d="M29 7Q33 3 35 8Q37 13 33 16Q29 14 29 7Z" fill="#dca58c" /><path d="M25 19Q28 14 33 18Q38 16 38 21Q32 26 25 19Z" fill="#b89ab4" />
            </svg>
            <Running />
          </ChromeSlot>
          <ActiveSlot>
            <MatlabIcon size={36} />
            <Running $wide />
          </ActiveSlot>
          <AppSlot>
            <svg width="34" height="36" viewBox="0 0 34 36"><defs><linearGradient id="ph" x1="0" y1="0" x2="1" y2="1"><stop offset="0" stopColor="#1394e0" /><stop offset=".5" stopColor="#2a66c4" /><stop offset="1" stopColor="#8c4ea6" /></linearGradient></defs><rect x="1" y="2" width="32" height="32" rx="4" fill="url(#ph)" /><path d="M1 28L14 15Q17 12 20 15L33 29Q33 34 29 34H5Q1 34 1 30Z" fill="#1684dc" /><path d="M1 27L14 15Q17 12 20 15L23 18L8 34H5Q1 34 1 30Z" fill="#4fd0fa" /><circle cx="24" cy="8.500" r="2.800" fill="#fff" /></svg>
            <Running />
          </AppSlot>
        </Apps>
        <Tray>
          <TraySlot $w={44}><svg width="18" height="18" viewBox="0 0 18 18"><path d="M1.500 13L9 5.500L16.500 13" fill="none" stroke="#fff" strokeWidth="2" /></svg></TraySlot>
          <TraySlot $w={48}><svg width="26" height="22" viewBox="0 0 26 22"><path d="M6 19C-1 19 0 10 6 10C8 2 18 1 19 8C27 8 27 19 20 19Z" fill="#707070" /><path d="M3 17L14 11L24 15Q23 19 20 19H6Q4 19 3 17Z" fill="#a5a5a5" /><path d="M5 2L23 21" stroke="#fff" strokeWidth="1.500" /></svg></TraySlot>
          <TraySlot $w={36}><svg width="25" height="20" viewBox="0 0 25 20" fill="none" stroke="#fff" strokeWidth="1.800"><path d="M1 7.500C7 1 18 1 24 7.500M4.500 11C9 6.500 16 6.500 20.500 11M8 14.500C10.500 12 14.500 12 17 14.500" /><circle cx="12.500" cy="17" r="2" fill="#fff" stroke="none" /></svg></TraySlot>
          <TraySlot $w={36}><svg width="25" height="20" viewBox="0 0 25 20" fill="none" stroke="#fff" strokeWidth="1.600"><path d="M1 7H5L10 2V18L5 13H1Z" strokeLinejoin="round" /><path d="M14.500 6L23 14.500M23 6L14.500 14.500" /></svg></TraySlot>
          <TraySlot $w={22}><svg width="26" height="24" viewBox="0 0 26 24"><path d="M12 6H18Q21 6 21 9V16Q21 19 18 19H4" fill="none" stroke="#fff" strokeWidth="1.800" /><path d="M21.500 10H24.500V15H21.500Z" fill="#fff" /><path d="M8 0C12 5 13 11 7 15H1C1 9 3 4 8 0Z" fill="#fff" /><path d="M8 7L3 18" stroke="#1c1c1c" /></svg></TraySlot>
          <Clock><span>8:47 PM</span><span>9/9/2025</span></Clock>
        </Tray>
      </Taskbar>

      <Dialog>
        <DialogTitle><SimulinkIcon framed /><span>Block Parameters: PID Controller</span><Spacer /><CloseX /></DialogTitle>
        <DialogBody>
          <RadioRow><Radio /><span>Discrete-time</span></RadioRow>
          <SampleRow>
            <span>Sample time (-1 for inherited):</span>
            <SampleField>-1</SampleField>
            <MoreButton><svg width="4" height="12"><path d="M0 0H3V2H0ZM0 5H3V8H0Z" fill="#888" /></svg></MoreButton>
          </SampleRow>
        </DialogBody>
      </Dialog>

      <Panel>
        <PanelBar><svg width="12" height="10" viewBox="0 0 12 10"><path d="M1 .5L11 9.500M11 .5L1 9.500" stroke="#fff" strokeWidth="2.200" /></svg></PanelBar>
        <PanelRule />
        <Group $h={235} $mt={1}><Legend>Controller Parameters</Legend><ParamTable rows={controller} /></Group>
        <Group $h={262} $mt={18}><Legend>Performance and Robustness</Legend><ParamTable rows={performance} /></Group>
        <PanelFoot><Resize /></PanelFoot>
      </Panel>

      <Tuner>
        <TunerTitle>
          <MatlabIcon size={24} /><span>PID Tuner (Sistema/PID Controller) - Step Plot: Reference tracking</span>
          <Spacer />
          <svg width="156" height="16" viewBox="0 0 156 16" fill="none" stroke="#8c8c8c" strokeWidth="1.300">
            <path d="M0 8H15" /><rect x="70" y="1.500" width="13" height="13" rx="2" /><path d="M140.500 .5L155 15M155 .5L140.500 15" />
          </svg>
        </TunerTitle>
        <TabStrip>
          <StripPattern width="600" height="35" viewBox="0 0 600 35" fill="none" stroke="#4f83b8" strokeWidth="1" opacity=".4">
            {Array.from({ length: 9 }, (_, i) => <path key={i} d={`M${40 + i * 30} 35Q${120 + i * 30} 0 ${260 + i * 12} 0`} opacity={0.3 + i * 0.07} />)}
            {Array.from({ length: 9 }, (_, i) => <path key={`d${i}`} d={`M${60 + i * 26} 0L${160 + i * 26} 35`} opacity=".5" />)}
            {Array.from({ length: 12 }, (_, i) => <path key={`x${i}`} d={`M${330 + i * 22} 35L${352 + i * 22} 0M${330 + i * 22} 0L${356 + i * 22} 35`} opacity=".7" />)}
          </StripPattern>
          <RibbonTab $w={175} $on>PID TUNER</RibbonTab>
          <RibbonTab $w={132}>VIEW</RibbonTab>
          <QuickAccess><QuickIcons /></QuickAccess>
        </TabStrip>
        <Ribbon>
          <Section $w={126}>
            <SectionBody $pl={17}>
              <Caption>Plant:</Caption>
              <PlantButton>Plant <Down w={13} h={8} /></PlantButton>
              <ToolLine $mt={11} $ml={5} $gap={3}><InspectIcon />Inspect</ToolLine>
            </SectionBody>
            <SectionName $shift={7}>PLANT</SectionName>
          </Section>
          <Section $w={134}>
            <SectionBody>
              <FormGrid><span>Type:</span><span>PIDF</span><span>Form:</span><span>Parallel</span></FormGrid>
              <ToolLine $mt={6} $ml={23} $gap={7}><GearIcon />Options</ToolLine>
            </SectionBody>
            <SectionName $shift={5}>CONTROLLER</SectionName>
          </Section>
          <Section $w={152}>
            <SectionBody $pl={17}>
              <Caption>Domain:</Caption>
              <TimeSelect>Time <Down w={13} h={8} /></TimeSelect>
              <ToolLine $mt={10} $ml={6} $gap={5}><AddPlotIcon />Add Plot<Down w={13} h={8} /></ToolLine>
            </SectionBody>
            <SectionName $shift={6}>DESIGN</SectionName>
          </Section>
          <Section $w={700}>
            <SectionBody $row>
              <Sliders>
                <SliderRow $pl={13}>
                  <Jog $w={22} $ml={0}><JogIcon /></Jog>
                  <SliderBlock $w={333} $pl={7}>
                    <Track w={326} from={19.5} to={308.5} ticks={5} knob={199.5} />
                    <SliderNames $mid={0}><span>Slower</span><span>Response Time (seconds)</span><span>Faster</span></SliderNames>
                  </SliderBlock>
                  <Jog $w={22} $ml={10}><JogIcon flip /></Jog>
                </SliderRow>
                <SliderRow $pl={28}>
                  <SliderBlock $w={344}>
                    <Track w={344} from={32.5} to={323} ticks={7} knob={323.5} />
                    <SliderNames $mid={-3}><span>Aggressive</span><span>Transient Behavior</span><span>Robust</span></SliderNames>
                  </SliderBlock>
                </SliderRow>
              </Sliders>
              <Spinners>
                {['0.01435', '0.9'].map(v => (
                  <SpinBox key={v}><span>{v}</span><SpinButtons><Up /><Down w={12} h={7} /></SpinButtons></SpinBox>
                ))}
              </Spinners>
              <BigButton $w={60} $ml={12}><BigIcon $ml={2}><ResetIcon /></BigIcon><span>Reset</span><span>Design</span></BigButton>
              <BigButton $w={90} $ml={14}><BigIcon><GridIcon /></BigIcon><span>Show</span><span>Parameters</span></BigButton>
            </SectionBody>
            <SectionName $shift={5}>TUNING TOOLS</SectionName>
          </Section>
          <Section $w={101}>
            <SectionBody $row>
              <BigButton $w={70} $ml={15}><BigIcon><PlayIcon /></BigIcon><span>Update</span><InlineRow>Block<Down w={13} h={8} /></InlineRow></BigButton>
            </SectionBody>
            <SectionName $shift={6}>RESULTS</SectionName>
          </Section>
          <Collapse><svg width="17" height="18"><path d="M0 2H17" stroke="#5c5c5c" strokeWidth="3" /><path d="M1 16H16L8.500 6Z" fill="#5c5c5c" /></svg></Collapse>
        </Ribbon>
        <DocArea>
          <SideBar><SideTab>Data Browser</SideTab></SideBar>
          <DocColumn>
            <DocTabs>
              <TabGap $w={21}><Grip /></TabGap>
              <DocTab><span>Step Plot: Reference tracking</span><svg width="15" height="14"><path d="M2 1.500L13 12.500M13 1.500L2 12.500" stroke="#b9b9b9" strokeWidth="4" /></svg></DocTab>
              <TabGap />
            </DocTabs>
            <Plot />
          </DocColumn>
        </DocArea>
        <TunerStatus><span>Controller Parameters: P = 292.6, I = 7206, D = 0.3915, N = 508.1</span><Resize /></TunerStatus>
      </Tuner>
    </Desktop>
  );
}
